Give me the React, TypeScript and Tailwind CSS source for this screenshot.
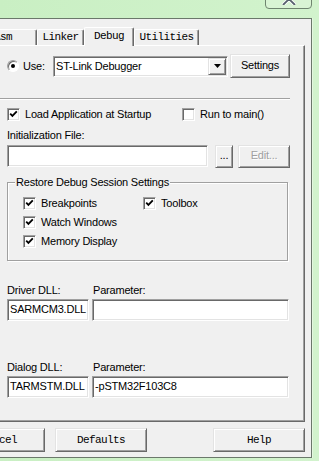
import type { ReactNode } from "react";

const sans = "font-['Liberation_Sans',Arial,sans-serif] text-[11px] leading-[13px] tracking-[-0.2px]";
const mono = "font-['Liberation_Mono','Courier_New',monospace] text-[11px] leading-[13px] tracking-[-0.6px]";

const sunken =
  "border border-t-[#a0a0a0] border-l-[#a0a0a0] border-b-white border-r-white shadow-[inset_1px_1px_0_#696969,inset_-1px_-1px_0_#e3e3e3] bg-white";
const raised =
  "border border-t-[#e3e3e3] border-l-[#e3e3e3] border-b-[#696969] border-r-[#696969] shadow-[inset_1px_1px_0_#fff,inset_-1px_-1px_0_#a0a0a0] bg-[#f0f0f0]";

const Check = ({ on }: { on?: boolean }) => (
  <span className={`flex h-[13px] w-[13px] shrink-0 items-center justify-center ${sunken}`}>
    {on && (
      <svg width="9" height="9" viewBox="0 0 9 9">
        <path d="M1.2 3.6 L3.4 5.9 L7.8 1.3" stroke="#000" strokeWidth="1.8" fill="none" />
      </svg>
    )}
  </span>
);

const CheckRow = ({ on, label, className = "" }: { on?: boolean; label: string; className?: string }) => (
  <div className={`flex h-[13px] items-center gap-[5px] ${className}`}>
    <Check on={on} />
    <span className={sans}>{label}</span>
  </div>
);

const Field = ({ value, className = "" }: { value?: string; className?: string }) => (
  <div className={`flex h-[22px] items-center pb-[1px] pl-[2px] ${sunken} ${className}`}>
    <span className={sans}>{value}</span>
  </div>
);

const Tab = ({ children, className }: { children: ReactNode; className: string }) => (
  <div
    className={`flex items-center rounded-t-[2px] border-t border-l border-r border-t-white border-l-white border-r-[#696969] bg-[#f0f0f0] shadow-[inset_-1px_0_0_#a0a0a0] ${mono} ${className}`}
  >
    {children}
  </div>
);

const Button = ({ children, className = "" }: { children: ReactNode; className?: string }) => (
  <div className={`flex items-center justify-center ${raised} ${className}`}>{children}</div>
);

export default function App() {
  return (
    <div className="flex h-[461px] w-[319px] flex-col overflow-hidden bg-gradient-to-r from-[#c9efc3] to-[#d2f3cd] text-black">
      {/* caption strip with the close button */}
      <div className="flex h-[18px] shrink-0 justify-end pr-[7px]">
        <div className="relative -mt-[1px] flex h-[10px] w-[47px] justify-center overflow-hidden rounded-b-[4px] border border-[#6f846f] bg-[#d9f4d4]">
          <svg width="16" height="6" viewBox="0 0 16 6" className="mt-[-1px]">
            <path d="M2 6 L8 0 L14 6" stroke="#fff" strokeWidth="3.4" fill="none" />
            <path d="M2 6 L8 0 L14 6" stroke="#58626e" strokeWidth="1.8" fill="none" />
          </svg>
        </div>
      </div>

      <div className="flex">
        <div className="h-[440px] w-[312px] shrink-0 border-t border-r border-b border-[#6b786b] bg-[#f0f0f0] pt-[8px] pr-[6px]">
          {/* tabs */}
          <div className="-ml-[14px] flex h-[18px] items-end">
            <Tab className="h-[16px] w-[51px] justify-end pr-[24px]">Asm</Tab>
            <Tab className="h-[16px] w-[47px] justify-center">Linker</Tab>
            <Tab className="relative z-10 -mb-[1px] h-[19px] w-[50px] justify-center pb-[2px]">Debug</Tab>
            <Tab className="h-[16px] w-[65px] justify-center">Utilities</Tab>
          </div>

          {/* tab page */}
          <div className="flex h-[377px] flex-col border-t border-r border-b border-t-white border-r-[#696969] border-b-[#696969] pt-[8px] pl-[7px] shadow-[inset_-1px_-1px_0_#a0a0a0]">
            <div className="flex h-[24px] items-center">
              <div className="w-[16px]">
                <span className="flex h-[12px] w-[12px] items-center justify-center rounded-full border border-t-[#a0a0a0] border-l-[#a0a0a0] border-b-white border-r-white bg-white shadow-[inset_1px_1px_0_#696969]">
                  <span className="h-[4px] w-[4px] rounded-full bg-black" />
                </span>
              </div>
              <span className={`w-[30px] ${sans}`}>Use:</span>
              <div className={`flex h-[21px] w-[175px] p-[1px] ${sunken}`}>
                <span className={`flex-1 self-center pl-[1px] ${sans}`}>ST-Link Debugger</span>
                <Button className="h-full w-[18px]">
                  <svg width="7" height="4" viewBox="0 0 7 4">
                    <path d="M0 0 H7 L3.5 4 Z" fill="#000" />
                  </svg>
                </Button>
              </div>
              <Button className={`ml-[2px] h-[24px] w-[60px] pb-[2px] ${sans}`}>Settings</Button>
            </div>

            <div className="-ml-[7px] mt-[20px] h-[2px] w-[290px] border-t border-b border-t-[#a0a0a0] border-b-white" />

            <div className="mt-[8px] flex h-[13px] items-center">
              <CheckRow on label="Load Application at Startup" className="w-[175px]" />
              <CheckRow label="Run to main()" />
            </div>

            <span className={`mt-[8px] h-[13px] ${sans}`}>Initialization File:</span>
            <div className="mt-[3px] flex items-start">
              <Field className="w-[201px]" />
              <Button className={`ml-[7px] h-[23px] w-[18px] pb-[2px] ${sans}`}>...</Button>
              <Button className={`ml-[5px] h-[23px] w-[52px] pb-[2px] ${sans} text-[#a0a0a0] [text-shadow:1px_1px_0_#fff]`}>
                Edit...
              </Button>
            </div>

            <div className="relative mt-[14px] h-[79px] w-[281px] shrink-0 border border-[#a0a0a0] pt-[14px] pl-[15px] shadow-[inset_1px_1px_0_#fff,1px_1px_0_#fff]">
              <span className={`absolute -top-[7px] left-[7px] bg-[#f0f0f0] px-[1px] ${sans}`}>
                Restore Debug Session Settings
              </span>
              <div className="flex flex-col gap-[6px]">
                <div className="flex">
                  <CheckRow on label="Breakpoints" className="w-[120px]" />
                  <CheckRow on label="Toolbox" />
                </div>
                <CheckRow on label="Watch Windows" />
                <CheckRow on label="Memory Display" />
              </div>
            </div>

            <div className="mt-[23px] flex h-[13px]">
              <span className={`w-[86px] ${sans}`}>Driver DLL:</span>
              <span className={sans}>Parameter:</span>
            </div>
            <div className="mt-[2px] flex">
              <Field value="SARMCM3.DLL" className="w-[82px]" />
              <Field className="ml-[3px] w-[197px]" />
            </div>

            <div className="mt-[40px] flex h-[13px]">
              <span className={`w-[86px] ${sans}`}>Dialog DLL:</span>
              <span className={sans}>Parameter:</span>
            </div>
            <div className="mt-[2px] flex">
              <Field value="TARMSTM.DLL" className="w-[82px]" />
              <Field value="-pSTM32F103C8" className="ml-[3px] w-[197px]" />
            </div>
          </div>

          {/* dialog buttons */}
          <div className="-ml-[47px] mt-[6px] flex">
            <Button className={`h-[24px] w-[92px] ${mono}`}>Cancel</Button>
            <Button className={`ml-[10px] h-[24px] w-[92px] ${mono}`}>Defaults</Button>
            <Button className={`ml-[66px] h-[24px] w-[92px] ${mono}`}>Help</Button>
          </div>
        </div>
        <div className="flex-1 border-l border-[#e4f7e0]" />
      </div>
    </div>
  );
}
